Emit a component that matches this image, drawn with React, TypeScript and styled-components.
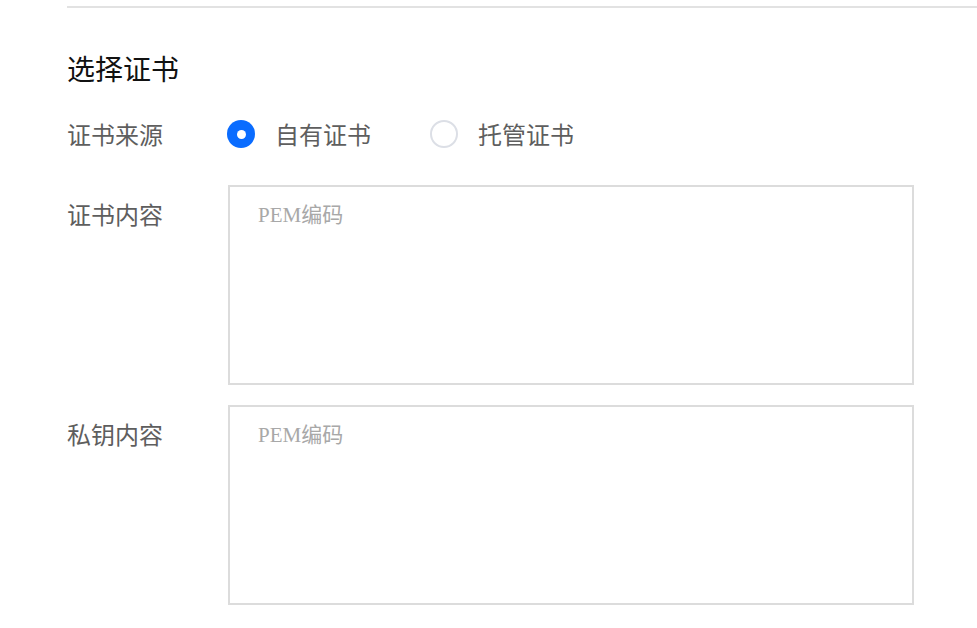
import React, { useState } from "react";
import styled, { createGlobalStyle } from "styled-components";

const Global = createGlobalStyle`
  html, body { margin: 0; padding: 0; background: #fff; }
  body { font-family: "Noto Sans CJK SC", "Noto Sans", sans-serif; }
`;

const Page = styled.div`
  padding-left: 67px;
  padding-top: 6px;
`;

const Divider = styled.div`
  height: 2px;
  background: #e2e2e2;
`;

const Form = styled.div`
  padding-right: 63px;
`;

const Title = styled.h2`
  margin: 40px 0 0;
  font-size: 28px;
  line-height: 40px;
  font-weight: 400;
  color: #111;
`;

const Row = styled.div<{ $top: number }>`
  display: flex;
  align-items: flex-start;
  margin-top: ${(p) => p.$top}px;
`;

const Label = styled.div<{ $pad: number; $lh: number }>`
  width: 160px;
  flex: none;
  font-size: 24px;
  line-height: ${(p) => p.$lh}px;
  color: #5e5e5e;
  padding-top: ${(p) => p.$pad}px;
`;

const RadioGroup = styled.div`
  display: flex;
  align-items: center;
  gap: 59px;
`;

const RadioItem = styled.label`
  display: flex;
  align-items: center;
  gap: 20px;
  cursor: pointer;
  font-size: 24px;
  line-height: 28px;
  color: #5e5e5e;
`;

const Circle = styled.span<{ $on: boolean }>`
  box-sizing: border-box;
  width: 28px;
  height: 28px;
  border-radius: 50%;
  flex: none;
  background: ${(p) => (p.$on ? "#0a6cff" : "#fff")};
  border: ${(p) => (p.$on ? "none" : "2px solid #dcdfe6")};
  display: flex;
  align-items: center;
  justify-content: center;
  &::after {
    content: "";
    display: ${(p) => (p.$on ? "block" : "none")};
    width: 9px;
    height: 9px;
    border-radius: 50%;
    background: #fff;
  }
`;

const Area = styled.textarea`
  box-sizing: border-box;
  flex: 1;
  margin-left: 1px;
  height: 200px;
  border: 2px solid #dcdcdc;
  border-radius: 0;
  padding: 14px 28px;
  resize: none;
  outline: none;
  font-family: "Liberation Serif", "Noto Sans CJK SC", serif;
  font-size: 21px;
  line-height: 28px;
  color: #333;
  &::placeholder {
    color: #a8a8a8;
  }
`;

export default function App() {
  const [src, setSrc] = useState("own");
  return (
    <Page>
      <Global />
      <Divider />
      <Form>
        <Title>选择证书</Title>
        <Row $top={32}>
          <Label $pad={0} $lh={28}>证书来源</Label>
          <RadioGroup>
            <RadioItem onClick={() => setSrc("own")}>
              <Circle $on={src === "own"} />
              自有证书
            </RadioItem>
            <RadioItem onClick={() => setSrc("hosted")}>
              <Circle $on={src === "hosted"} />
              托管证书
            </RadioItem>
          </RadioGroup>
        </Row>
        <Row $top={37}>
          <Label $pad={13} $lh={32}>证书内容</Label>
          <Area placeholder="PEM编码" />
        </Row>
        <Row $top={20}>
          <Label $pad={13} $lh={32}>私钥内容</Label>
          <Area placeholder="PEM编码" />
        </Row>
      </Form>
    </Page>
  );
}
